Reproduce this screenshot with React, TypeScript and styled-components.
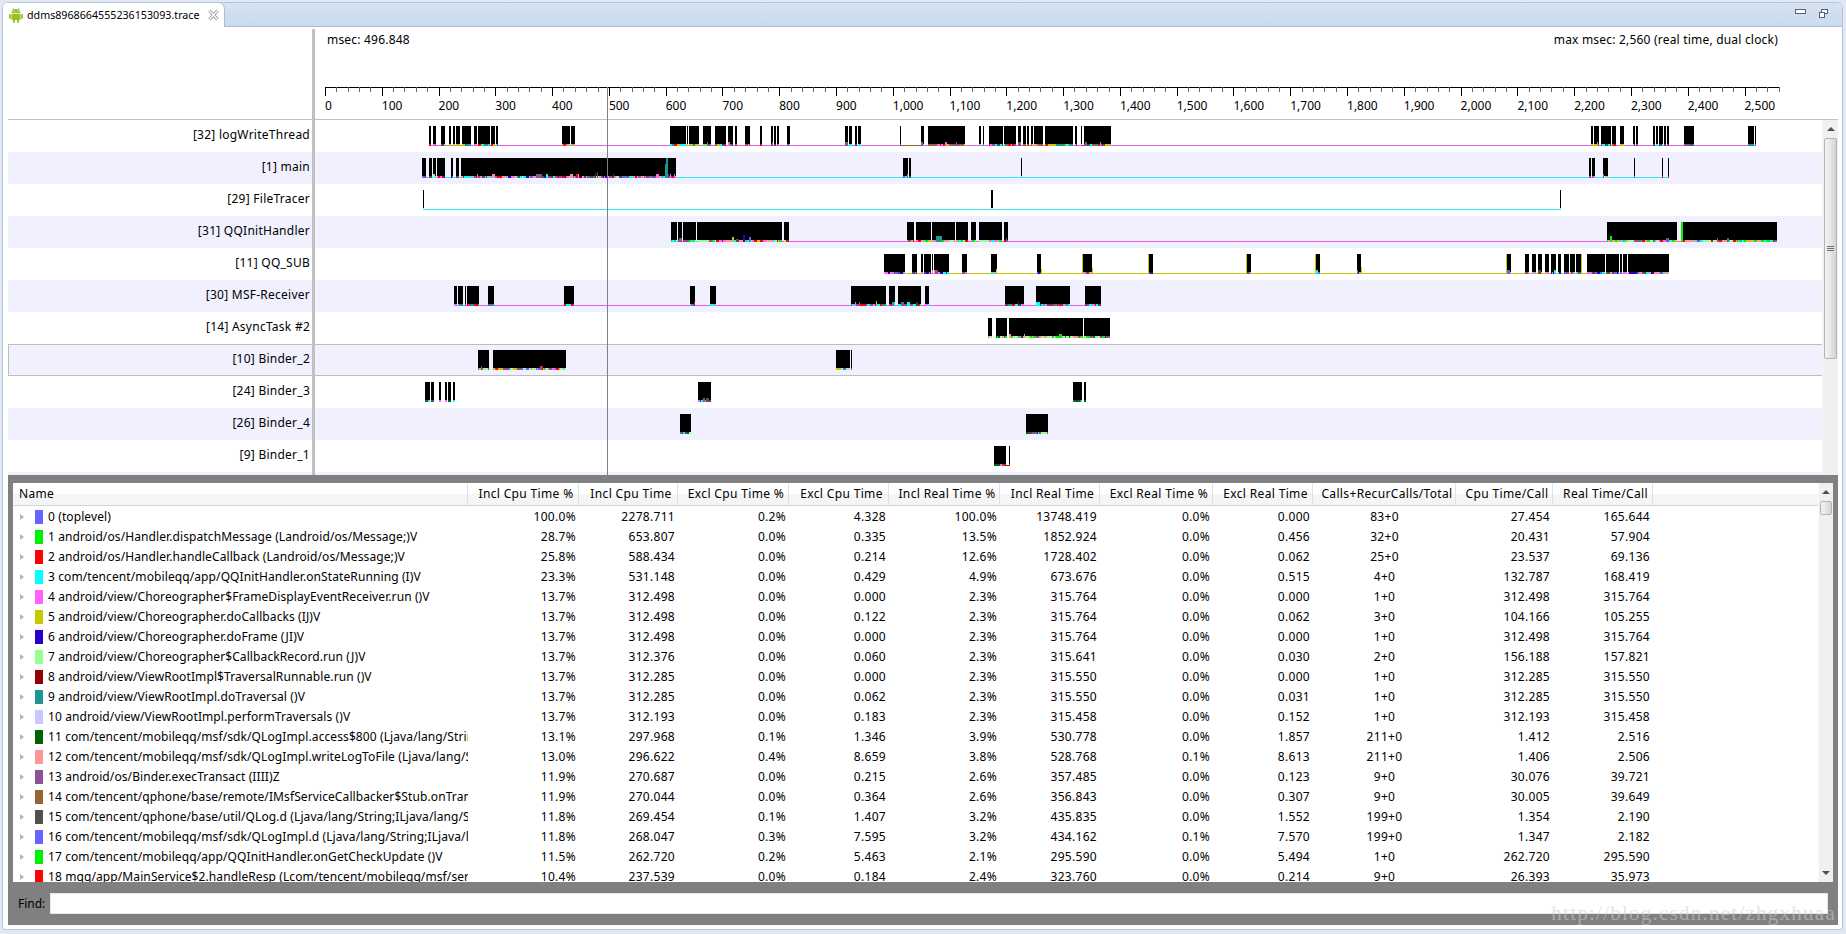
import React from 'react';
import styled, { createGlobalStyle } from 'styled-components';

const PALETTE = ['#6464ff', '#00f000', '#ff0000', '#00ffff', '#ff64ff', '#c8c800', '#2800c8', '#96ff96', '#960000', '#1e9696', '#c8c8ff', '#006400', '#ff9696', '#8c5096', '#966432', '#505050'];
const CANVAS_LEFT = 315;
const TIME_COLS = '455px 111px 99px 111px 100px 111px 100px 113px 100px 143px 97px 100px 1fr';

type Seg = [number, number];
type Spike = [number, number, number, string];

interface Thread {
  label: string;
  line?: string;
  lineFrom?: number;
  lineTo?: number;
  mix: number[];
  segs: Seg[];
  spikes?: Spike[];
  selected?: boolean;
}

const THREADS: Thread[] = [
  {
    label: '[32] logWriteThread', line: '#e660e6', lineFrom: 429, lineTo: 1756, mix: [13, 4, 9, 15, 5, 2, 14, 3],
    segs: [[429, 431], [433, 436], [441, 445], [449, 451], [453, 455], [456, 460], [462, 471], [474, 477], [478, 490], [491, 495], [496, 498], [562, 570], [571, 575], [670, 686], [687, 688], [689, 699], [703, 711], [715, 726], [728, 733], [735, 737], [745, 750], [760, 762], [771, 773], [774, 776], [777, 779], [787, 790], [845, 848], [849, 852], [855, 857], [858, 861], [900, 901], [921, 924], [928, 965], [979, 981], [983, 984], [989, 1003], [1004, 1016], [1018, 1021], [1023, 1026], [1027, 1029], [1031, 1033], [1034, 1043], [1045, 1073], [1075, 1077], [1081, 1082], [1084, 1111], [1591, 1593], [1594, 1599], [1601, 1611], [1612, 1616], [1620, 1624], [1633, 1635], [1636, 1638], [1653, 1655], [1656, 1658], [1659, 1663], [1664, 1666], [1667, 1669], [1684, 1694], [1748, 1754], [1755, 1756]],
    spikes: [[901, 20, 1, '#966432'], [1082, 2, 1, '#505050']],
  },
  {
    label: '[1] main', line: '#2cecf4', lineFrom: 422, lineTo: 1669, mix: [12, 2, 4, 13, 0, 3, 7, 15, 6],
    segs: [[422, 426], [429, 432], [433, 436], [437, 445], [451, 453], [456, 459], [461, 676], [903, 908], [909, 911], [1021, 1022], [1589, 1591], [1592, 1595], [1603, 1608], [1634, 1635], [1662, 1663], [1668, 1669]],
    spikes: [[666, 2, 20, '#1e9696'], [665, 1, 14, '#1e9696'], [595, 1, 5, '#006400'], [597, 1, 6, '#505050'], [613, 1, 4, '#006400'], [670, 1, 4, '#ff64ff'], [674, 1, 4, '#ff64ff']],
  },
  { label: '[29] FileTracer', line: '#2cecf4', lineFrom: 423, lineTo: 1561, mix: [10], segs: [[423, 424], [991, 993], [1560, 1561]] },
  {
    label: '[31] QQInitHandler', line: '#e660e6', lineFrom: 671, lineTo: 1777, mix: [13, 4, 7, 3, 12, 2, 5, 1],
    segs: [[671, 677], [678, 682], [683, 696], [697, 782], [784, 789], [907, 914], [916, 931], [932, 955], [956, 968], [971, 976], [979, 1002], [1004, 1008], [1607, 1677], [1681, 1777]],
    spikes: [[732, 2, 5, '#c8c800'], [736, 3, 3, '#505050'], [743, 2, 7, '#2800c8'], [749, 2, 5, '#6464ff'], [936, 6, 6, '#1e9696'], [1610, 2, 6, '#00f000'], [1681, 2, 20, '#00f000']],
  },
  {
    label: '[11] QQ_SUB', line: '#c8c800', lineFrom: 884, lineTo: 1669, mix: [13, 12, 0, 4, 3, 15, 6],
    segs: [[884, 905], [912, 917], [921, 923], [924, 931], [932, 933], [934, 949], [962, 967], [991, 997], [1037, 1041], [1082, 1092], [1148, 1153], [1246, 1251], [1315, 1320], [1357, 1361], [1506, 1511], [1525, 1529], [1532, 1536], [1538, 1542], [1545, 1549], [1551, 1556], [1558, 1561], [1564, 1569], [1570, 1575], [1576, 1582], [1587, 1605], [1606, 1619], [1620, 1622], [1623, 1627], [1628, 1669]],
    spikes: [[1082, 1, 20, '#c8c800'], [1148, 1, 20, '#c8c800'], [1246, 1, 20, '#c8c800'], [1315, 1, 20, '#c8c800'], [1506, 1, 20, '#c8c800'], [1581, 1, 20, '#c8c800'], [1361, 1, 7, '#c8c800'], [1092, 1, 6, '#c8c800'], [996, 1, 5, '#c8c800'], [1041, 1, 5, '#c8c800']],
  },
  {
    label: '[30] MSF-Receiver', line: '#e660e6', lineFrom: 454, lineTo: 1101, mix: [13, 4, 9, 15, 3, 2],
    segs: [[454, 457], [458, 463], [465, 466], [467, 479], [488, 494], [564, 574], [690, 695], [710, 716], [851, 886], [889, 895], [898, 921], [925, 929], [1005, 1024], [1036, 1070], [1085, 1101]],
    spikes: [[876, 1, 5, '#c8c800'], [1018, 1, 5, '#960000'], [916, 2, 4, '#006400']],
  },
  {
    label: '[14] AsyncTask #2', mix: [13, 1, 7, 4, 12, 11],
    segs: [[988, 992], [996, 1007], [1009, 1083], [1084, 1110]],
  },
  {
    label: '[10] Binder_2', selected: true, mix: [13, 0, 5, 7, 2, 4],
    segs: [[478, 489], [493, 566], [836, 850], [851, 852]],
  },
  {
    label: '[24] Binder_3', mix: [4, 13, 3, 11, 15],
    segs: [[425, 430], [431, 434], [439, 441], [445, 447], [448, 451], [453, 455], [698, 711], [1073, 1082], [1084, 1086]],
  },
  { label: '[26] Binder_4', mix: [13, 3, 11, 15, 7], segs: [[680, 691], [1026, 1048]] },
  { label: '[9] Binder_1', mix: [13, 4, 11, 2], segs: [[994, 1006], [1009, 1010]], spikes: [[1006, 3, 1, '#006400']] },
  { label: '', mix: [], segs: [] },
];

const METHODS: [string, number, string[]][] = [
  ['0 (toplevel)', 0, ['100.0%', '2278.711', '0.2%', '4.328', '100.0%', '13748.419', '0.0%', '0.000', '83+0', '27.454', '165.644']],
  ['1 android/os/Handler.dispatchMessage (Landroid/os/Message;)V', 1, ['28.7%', '653.807', '0.0%', '0.335', '13.5%', '1852.924', '0.0%', '0.456', '32+0', '20.431', '57.904']],
  ['2 android/os/Handler.handleCallback (Landroid/os/Message;)V', 2, ['25.8%', '588.434', '0.0%', '0.214', '12.6%', '1728.402', '0.0%', '0.062', '25+0', '23.537', '69.136']],
  ['3 com/tencent/mobileqq/app/QQInitHandler.onStateRunning (I)V', 3, ['23.3%', '531.148', '0.0%', '0.429', '4.9%', '673.676', '0.0%', '0.515', '4+0', '132.787', '168.419']],
  ['4 android/view/Choreographer$FrameDisplayEventReceiver.run ()V', 4, ['13.7%', '312.498', '0.0%', '0.000', '2.3%', '315.764', '0.0%', '0.000', '1+0', '312.498', '315.764']],
  ['5 android/view/Choreographer.doCallbacks (IJ)V', 5, ['13.7%', '312.498', '0.0%', '0.122', '2.3%', '315.764', '0.0%', '0.062', '3+0', '104.166', '105.255']],
  ['6 android/view/Choreographer.doFrame (JI)V', 6, ['13.7%', '312.498', '0.0%', '0.000', '2.3%', '315.764', '0.0%', '0.000', '1+0', '312.498', '315.764']],
  ['7 android/view/Choreographer$CallbackRecord.run (J)V', 7, ['13.7%', '312.376', '0.0%', '0.060', '2.3%', '315.641', '0.0%', '0.030', '2+0', '156.188', '157.821']],
  ['8 android/view/ViewRootImpl$TraversalRunnable.run ()V', 8, ['13.7%', '312.285', '0.0%', '0.000', '2.3%', '315.550', '0.0%', '0.000', '1+0', '312.285', '315.550']],
  ['9 android/view/ViewRootImpl.doTraversal ()V', 9, ['13.7%', '312.285', '0.0%', '0.062', '2.3%', '315.550', '0.0%', '0.031', '1+0', '312.285', '315.550']],
  ['10 android/view/ViewRootImpl.performTraversals ()V', 10, ['13.7%', '312.193', '0.0%', '0.183', '2.3%', '315.458', '0.0%', '0.152', '1+0', '312.193', '315.458']],
  ['11 com/tencent/mobileqq/msf/sdk/QLogImpl.access$800 (Ljava/lang/String;I)V', 11, ['13.1%', '297.968', '0.1%', '1.346', '3.9%', '530.778', '0.0%', '1.857', '211+0', '1.412', '2.516']],
  ['12 com/tencent/mobileqq/msf/sdk/QLogImpl.writeLogToFile (Ljava/lang/String;)V', 12, ['13.0%', '296.622', '0.4%', '8.659', '3.8%', '528.768', '0.1%', '8.613', '211+0', '1.406', '2.506']],
  ['13 android/os/Binder.execTransact (IIII)Z', 13, ['11.9%', '270.687', '0.0%', '0.215', '2.6%', '357.485', '0.0%', '0.123', '9+0', '30.076', '39.721']],
  ['14 com/tencent/qphone/base/remote/IMsfServiceCallbacker$Stub.onTransact', 14, ['11.9%', '270.044', '0.0%', '0.364', '2.6%', '356.843', '0.0%', '0.307', '9+0', '30.005', '39.649']],
  ['15 com/tencent/qphone/base/util/QLog.d (Ljava/lang/String;ILjava/lang/String;)V', 15, ['11.8%', '269.454', '0.1%', '1.407', '3.2%', '435.835', '0.0%', '1.552', '199+0', '1.354', '2.190']],
  ['16 com/tencent/mobileqq/msf/sdk/QLogImpl.d (Ljava/lang/String;ILjava/lang/String;)V', 0, ['11.8%', '268.047', '0.3%', '7.595', '3.2%', '434.162', '0.1%', '7.570', '199+0', '1.347', '2.182']],
  ['17 com/tencent/mobileqq/app/QQInitHandler.onGetCheckUpdate ()V', 1, ['11.5%', '262.720', '0.2%', '5.463', '2.1%', '295.590', '0.0%', '5.494', '1+0', '262.720', '295.590']],
  ['18 mqq/app/MainService$2.handleResp (Lcom/tencent/mobileqq/msf/service)V', 2, ['10.4%', '237.539', '0.0%', '0.184', '2.4%', '323.760', '0.0%', '0.214', '9+0', '26.393', '35.973']],
];

const COLUMNS = ['Name', 'Incl Cpu Time %', 'Incl Cpu Time', 'Excl Cpu Time %', 'Excl Cpu Time', 'Incl Real Time %', 'Incl Real Time', 'Excl Real Time %', 'Excl Real Time', 'Calls+RecurCalls/Total', 'Cpu Time/Call', 'Real Time/Call'];

const GlobalStyle = createGlobalStyle`
  html, body {
    margin: 0;
    height: 100%;
    overflow: hidden;
    background: #e2e8f3;
    font-family: "Noto Sans", "Open Sans", sans-serif;
    font-size: 12px;
    color: #000;
  }
`;

const Frame = styled.div`
  position: relative;
  box-sizing: border-box;
  margin: 2px 3px 0 2px;
  height: 928px;
  display: flex;
  flex-direction: column;
  background: #fff;
  border: 1px solid #b4c4da;
  border-radius: 6px 6px 3px 3px;
  overflow: hidden;
`;

const TabBar = styled.div`
  flex: none;
  height: 23px;
  display: flex;
  justify-content: space-between;
  background: linear-gradient(#d5e3f1, #c9dbee);
  border-bottom: 1px solid #aebcd2;
`;

const Tab = styled.div`
  box-sizing: border-box;
  width: 222px;
  height: 24px;
  display: flex;
  align-items: center;
  padding: 0 6px 0 5px;
  background: #fff;
  border-right: 1px solid #aebcd2;
  border-radius: 0 6px 0 0;
  font-size: 10.7px;
  white-space: nowrap;
`;

const TabTitle = styled.span`
  margin: 0 8px 0 3px;
`;

const WindowButtons = styled.div`
  display: flex;
  align-items: flex-start;
  gap: 13px;
  padding: 6px 14px 0 0;
`;

const Content = styled.div`
  flex: 1;
  min-height: 0;
  display: flex;
  flex-direction: column;
  padding: 0 4px 4px 5px;
`;

const TimelinePane = styled.div`
  position: relative;
  flex: none;
`;

const Cursor = styled.div`
  position: absolute;
  left: 599px;
  top: 60px;
  bottom: 0;
  width: 1px;
  background: #808080;
`;

const RulerRow = styled.div`
  height: 92px;
  display: grid;
  grid-template-columns: 304px 1fr;
  border-bottom: 1px solid #c0c0c0;
`;

const RulerCell = styled.div`
  margin-top: 2px;
  border-left: 3px solid #c0c0c0;
  display: flex;
  flex-direction: column;
`;

const RulerText = styled.div`
  display: flex;
  justify-content: space-between;
  padding: 1px 60px 0 12px;
  height: 20px;
  line-height: 20px;
  letter-spacing: 0.2px;
`;

const RulerSvg = styled.svg`
  display: block;
  margin-top: 37px;
`;

const ThreadArea = styled.div`
  display: grid;
  grid-template-columns: 1fr 16px;
  height: 355px;
  overflow: hidden;
`;

const ThreadRows = styled.div`
  min-width: 0;
`;

const ThreadRow = styled.div<{ $odd: boolean; $selected?: boolean }>`
  box-sizing: border-box;
  height: 32px;
  display: grid;
  grid-template-columns: 304px 1fr;
  background: ${(p) => (p.$odd ? '#f0f0ff' : '#fff')};
  box-shadow: ${(p) => (p.$selected ? 'inset 1px 1px 0 #bdbdbd, inset 0 -1px 0 #bdbdbd' : 'none')};
`;

const ThreadLabel = styled.div`
  padding-right: 2px;
  text-align: right;
  line-height: 30px;
  letter-spacing: 0.25px;
  white-space: nowrap;
`;

const ThreadCanvas = styled.div`
  border-left: 3px solid #c0c0c0;
  min-width: 0;
`;

const ThreadSvg = styled.svg`
  display: block;
`;

const ScrollTrack = styled.div`
  display: flex;
  flex-direction: column;
  align-items: stretch;
  background: #f0f0f0;
  border-left: 1px solid #f8f8f8;
`;

const ScrollButton = styled.div<{ $down?: boolean }>`
  flex: none;
  height: 18px;
  display: flex;
  align-items: center;
  justify-content: center;
  &::before {
    content: '';
    border-left: 4px solid transparent;
    border-right: 4px solid transparent;
    ${(p) => (p.$down ? 'border-top: 4px solid #505050;' : 'border-bottom: 4px solid #505050;')}
  }
`;

const ScrollThumb = styled.div<{ $height: number }>`
  flex: none;
  box-sizing: border-box;
  height: ${(p) => p.$height}px;
  margin: 0 1px;
  display: flex;
  flex-direction: column;
  align-items: center;
  justify-content: center;
  gap: 1px;
  background: linear-gradient(90deg, #f2f2f2, #e6e6e6 50%, #d2d2d2);
  border: 1px solid #b2b2b2;
  border-radius: 2px;
`;

const Grip = styled.i`
  width: 7px;
  height: 1px;
  background: #707070;
`;

const ScrollGap = styled.div`
  flex: 1;
`;

const ProfilePane = styled.div`
  flex: 1;
  min-height: 0;
  display: flex;
  flex-direction: column;
  padding: 8px 5px 11px;
  background: #808080;
`;

const TableBox = styled.div`
  flex: none;
  height: 399px;
  display: grid;
  grid-template-columns: 1fr 15px;
  background: #fff;
  overflow: hidden;
`;

const TableScroll = styled.div`
  min-width: 0;
  overflow: hidden;
`;

const HeaderRow = styled.div`
  height: 23px;
  margin-bottom: 1px;
  box-sizing: border-box;
  display: grid;
  grid-template-columns: ${TIME_COLS};
  background: linear-gradient(#fff 50%, #f4f5f6 50%);
  border-bottom: 1px solid #d5d5d5;
`;

const HeaderCell = styled.div<{ $left?: boolean }>`
  box-sizing: border-box;
  border-right: 1px solid #dde2e8;
  text-align: ${(p) => (p.$left ? 'left' : 'center')};
  padding-left: 6px;
  line-height: 22px;
  letter-spacing: 0.35px;
  white-space: nowrap;
  overflow: hidden;
`;

const BodyRow = styled.div`
  height: 20px;
  display: grid;
  grid-template-columns: ${TIME_COLS};
  line-height: 20px;
`;

const NameCell = styled.div`
  display: flex;
  align-items: center;
  padding-left: 7px;
  letter-spacing: 0.1px;
  white-space: nowrap;
  overflow: hidden;
`;

const Expander = styled.i`
  flex: none;
  width: 0;
  height: 0;
  border-left: 4px solid #b4b4b4;
  border-top: 3px solid transparent;
  border-bottom: 3px solid transparent;
`;

const Swatch = styled.i<{ $color: string }>`
  flex: none;
  width: 8px;
  height: 14px;
  margin: 0 5px 0 11px;
  background: ${(p) => p.$color};
`;

const ValueCell = styled.div<{ $center?: boolean }>`
  padding-right: ${(p) => (p.$center ? '0' : '3px')};
  text-align: ${(p) => (p.$center ? 'center' : 'right')};
  letter-spacing: 0.3px;
  white-space: nowrap;
`;

const FindBar = styled.div`
  flex: 1;
  display: flex;
  align-items: center;
  padding: 11px 5px 0 5px;
`;

const FindLabel = styled.label`
  flex: none;
  width: 32px;
`;

const FindInput = styled.input`
  flex: 1;
  min-width: 0;
  box-sizing: border-box;
  height: 21px;
  border: 1px solid #e6e6e6;
  background: #fff;
  outline: none;
  padding: 0 3px;
`;

const Watermark = styled.div`
  position: absolute;
  right: 6px;
  bottom: 3px;
  font-family: "Liberation Serif", serif;
  font-size: 21px;
  letter-spacing: 1.25px;
  color: rgba(205, 205, 205, 0.55);
  pointer-events: none;
`;

function AndroidIcon() {
  return (
    <svg width="16" height="16" viewBox="0 0 16 16" fill="#97c024" style={{ flex: 'none' }}>
      <path d="M3.4 6.2a4.6 4.2 0 0 1 9.2 0z" />
      <path d="M4.6 1l1.3 2M11.4 1l-1.3 2" stroke="#97c024" strokeWidth="0.8" />
      <rect x="3.4" y="6.9" width="9.2" height="6" rx="0.8" />
      <rect x="1" y="6.9" width="1.8" height="5" rx="0.9" />
      <rect x="13.2" y="6.9" width="1.8" height="5" rx="0.9" />
      <rect x="5" y="12" width="2" height="4" rx="1" />
      <rect x="9" y="12" width="2" height="4" rx="1" />
      <circle cx="6" cy="4.3" r="0.6" fill="#fff" />
      <circle cx="10" cy="4.3" r="0.6" fill="#fff" />
    </svg>
  );
}

function CloseIcon() {
  return (
    <svg width="11" height="12" viewBox="0 0 11 12" style={{ flex: 'none' }}>
      <path d="M1.5 1.5l8 9M9.5 1.5l-8 9" stroke="#8c8c8c" strokeWidth="3" />
      <path d="M1.5 1.5l8 9M9.5 1.5l-8 9" stroke="#fff" strokeWidth="1.4" />
    </svg>
  );
}

function MinimizeIcon() {
  return (
    <svg width="11" height="5" viewBox="0 0 11 5">
      <rect x="0.5" y="0.5" width="10" height="4" fill="#fff" stroke="#5a6472" />
    </svg>
  );
}

function RestoreIcon() {
  return (
    <svg width="9" height="9" viewBox="0 0 9 9">
      <rect x="2.5" y="0.5" width="6" height="4" fill="#fff" stroke="#5a6472" />
      <rect x="0.5" y="3.5" width="5" height="5" fill="#fff" stroke="#5a6472" />
    </svg>
  );
}

function Ruler() {
  const scale = 0.5678;
  const ticks: number[] = [];
  for (let t = 0; t <= 2560; t += 20) ticks.push(t);
  return (
    <RulerSvg width="1507" height="32" shapeRendering="crispEdges">
      <line x1="10" y1="0.5" x2="1464" y2="0.5" stroke="#000" />
      {ticks.map((t) => {
        const x = Math.round(10 + t * scale) + 0.5;
        return <line key={t} x1={x} y1="0" x2={x} y2={t % 100 === 0 ? 9 : 5} stroke={t % 100 === 0 ? '#000' : '#666'} />;
      })}
      {ticks.filter((t) => t % 100 === 0 && t <= 2500).map((t) => (
        <text key={t} x={10 + t * scale} y="23" fontSize="12" fill="#000" shapeRendering="auto">
          {t.toLocaleString('en-US')}
        </text>
      ))}
    </RulerSvg>
  );
}

function ThreadBars({ thread, seed }: { thread: Thread; seed: number }) {
  let state = seed * 7919 + 17;
  const next = (n: number) => {
    state = (state * 1103515245 + 12345) & 0x7fffffff;
    return (state >> 8) % n;
  };
  const noise: React.ReactNode[] = [];
  thread.segs.forEach(([from, to]) => {
    let x = from;
    while (x < to) {
      const w = Math.min(1 + next(3), to - x);
      const color = PALETTE[thread.mix[next(thread.mix.length)]];
      const tall = next(24) === 0 ? 2 : 0;
      noise.push(<rect key={x} x={x - CANVAS_LEFT} y={24 - tall} width={w} height={2 + tall} fill={color} />);
      x += w;
    }
  });
  return (
    <ThreadSvg width="1507" height="32" shapeRendering="crispEdges">
      {thread.line && (
        <rect x={thread.lineFrom! - CANVAS_LEFT} y="25" width={thread.lineTo! - thread.lineFrom!} height="1" fill={thread.line} />
      )}
      {thread.segs.map(([from, to]) => (
        <rect key={from} x={from - CANVAS_LEFT} y="6" width={to - from} height="18" fill="#000" />
      ))}
      {noise}
      {thread.spikes?.map(([x, w, h, color], i) => (
        <rect key={i} x={x - CANVAS_LEFT} y={h === 1 ? 25 : 26 - h} width={w} height={h} fill={color} />
      ))}
    </ThreadSvg>
  );
}

function Scrollbar({ thumb, grip }: { thumb: number; grip?: boolean }) {
  return (
    <ScrollTrack>
      <ScrollButton />
      <ScrollThumb $height={thumb}>
        {grip && (
          <>
            <Grip />
            <Grip />
            <Grip />
          </>
        )}
      </ScrollThumb>
      <ScrollGap />
      <ScrollButton $down />
    </ScrollTrack>
  );
}

export default function App() {
  return (
    <>
      <GlobalStyle />
      <Frame>
        <TabBar>
          <Tab>
            <AndroidIcon />
            <TabTitle>ddms8968664555236153093.trace</TabTitle>
            <CloseIcon />
          </Tab>
          <WindowButtons>
            <MinimizeIcon />
            <RestoreIcon />
          </WindowButtons>
        </TabBar>
        <Content>
          <TimelinePane>
            <RulerRow>
              <div />
              <RulerCell>
                <RulerText>
                  <span>msec: 496.848</span>
                  <span>max msec: 2,560 (real time, dual clock)</span>
                </RulerText>
                <Ruler />
              </RulerCell>
            </RulerRow>
            <ThreadArea>
              <ThreadRows>
                {THREADS.map((t, i) => (
                  <ThreadRow key={i} $odd={i % 2 === 1} $selected={t.selected}>
                    <ThreadLabel>{t.label}</ThreadLabel>
                    <ThreadCanvas>
                      <ThreadBars thread={t} seed={i + 1} />
                    </ThreadCanvas>
                  </ThreadRow>
                ))}
              </ThreadRows>
              <Scrollbar thumb={221} grip />
            </ThreadArea>
            <Cursor />
          </TimelinePane>
          <ProfilePane>
            <TableBox>
              <TableScroll>
                <HeaderRow>
                  {COLUMNS.map((c, i) => (
                    <HeaderCell key={c} $left={i === 0}>{c}</HeaderCell>
                  ))}
                </HeaderRow>
                {METHODS.map(([name, color, values]) => (
                  <BodyRow key={name}>
                    <NameCell>
                      <Expander />
                      <Swatch $color={PALETTE[color]} />
                      {name}
                    </NameCell>
                    {values.map((v, i) => (
                      <ValueCell key={i} $center={i === 8}>{v}</ValueCell>
                    ))}
                  </BodyRow>
                ))}
              </TableScroll>
              <Scrollbar thumb={14} />
            </TableBox>
            <FindBar>
              <FindLabel htmlFor="find">Find:</FindLabel>
              <FindInput id="find" />
            </FindBar>
          </ProfilePane>
        </Content>
        <Watermark>http://blog.csdn.net/zhgxhuaa</Watermark>
      </Frame>
    </>
  );
}
